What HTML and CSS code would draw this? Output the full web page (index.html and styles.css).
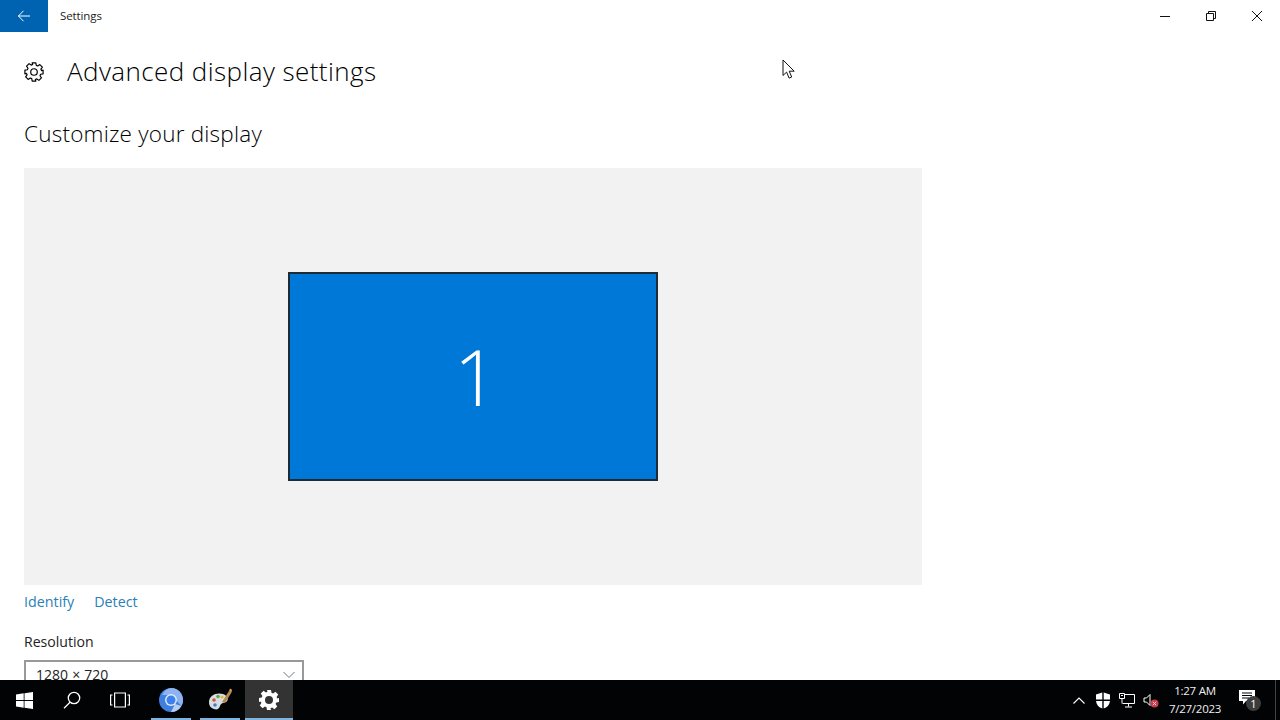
FILE: index.html
```html
<!DOCTYPE html>
<html lang="en">
<head>
<meta charset="utf-8">
<title>Settings</title>
<link rel="stylesheet" href="styles.css">
</head>
<body>
<div class="window">
  <header class="titlebar">
    <button class="back" aria-label="Back">
      <svg width="16" height="16" viewBox="0 0 16 16" fill="none" stroke="#fff" stroke-width="1"><path d="M2.5 8H14M7.5 2.800 2.400 8l5.100 5.200"/></svg>
    </button>
    <span class="app-name">Settings</span>
    <div class="controls">
      <span class="control"><svg width="12" height="12" viewBox="0 0 12 12" stroke="#111" fill="none"><path d="M1 6.500h10"/></svg></span>
      <span class="control"><svg width="12" height="12" viewBox="0 0 12 12" stroke="#111" fill="none"><path d="M1.500 3.500h7v7h-7zM3.500 3.500v-2h7v7h-2"/></svg></span>
      <span class="control"><svg width="12" height="12" viewBox="0 0 12 12" stroke="#111" fill="none"><path d="M1 1l10 10M11 1 1 11"/></svg></span>
    </div>
  </header>
  <main class="content">
    <div class="page-head">
      <svg class="page-gear" width="20" height="20" viewBox="-1 -1 22 22" fill="none" stroke="#000" stroke-width="1.300" stroke-linejoin="round"><path d="M8 0h4l.5 2.700 1.600.7 2.300-1.600 2.800 2.800-1.600 2.300.7 1.600L20 8v4l-2.700.5-.7 1.600 1.600 2.300-2.800 2.800-2.300-1.600-1.600.7L12 20H8l-.5-2.700-1.600-.7-2.300 1.600-2.800-2.800 1.600-2.300-.7-1.600L0 12V8l2.700-.5.7-1.600-1.600-2.300 2.800-2.800 2.300 1.600 1.600-.7z"/><circle cx="10" cy="10" r="3.600"/></svg>
      <h1 class="page-title">Advanced display settings</h1>
    </div>
    <h2 class="section-title">Customize your display</h2>
    <div class="preview">
      <div class="monitor">1</div>
    </div>
    <div class="links">
      <a class="link">Identify</a>
      <a class="link">Detect</a>
    </div>
    <label class="field-label">Resolution</label>
    <div class="select">
      <span>1280 × 720</span>
      <svg width="12" height="8" viewBox="0 0 12 8" fill="none" stroke="#777"><path d="M.5 1 6 6.500 11.500 1"/></svg>
    </div>
  </main>
  <svg class="cursor" width="13" height="21" viewBox="0 0 13 21"><path d="M1 1v15.500l3.600-3.400 2.500 6 2.600-1.100-2.500-5.800h5z" fill="#fff" stroke="#111" stroke-width="1"/></svg>
</div>
<footer class="taskbar">
  <div class="task"><svg width="17" height="17" viewBox="0 0 17 17" fill="#fff"><path d="M0 2.500 7.700 1.300v6.700H0zM8.500 1.200 17 0v8H8.500zM0 9h7.700v6.700L0 14.500zM8.500 9H17v8l-8.500-1.200z"/></svg></div>
  <div class="task"><svg width="18" height="18" viewBox="0 0 18 18" fill="none" stroke="#fff" stroke-width="1.300"><circle cx="11" cy="7" r="5.700"/><path d="M7 11.200 1 17.200"/></svg></div>
  <div class="task"><svg width="20" height="16" viewBox="0 0 20 16" fill="none" stroke="#fff" stroke-width="1.200"><path d="M4.600 1h10.800v14H4.600zM2.500 3H.6v10h1.900M17.500 3h1.900v10h-1.900"/></svg></div>
  <div class="task app open narrow"><svg width="24" height="24" viewBox="0 0 24 24"><circle cx="12" cy="12" r="12" fill="#3f7fe0"/><path d="M12 0a12 12 0 0 1 10.400 18L17 12a5 5 0 0 0-5-5H3A12 12 0 0 1 12 0z" fill="#8fb3ee"/><path d="M22.400 18A12 12 0 0 1 12 24l4-8z" fill="#b9cdef"/><circle cx="12" cy="12" r="6" fill="#dfe8f7"/><circle cx="12" cy="12" r="4.500" fill="#3b82f0"/></svg></div>
  <div class="task app open narrow"><svg width="26" height="24" viewBox="0 0 26 24"><path d="M2 14C2 7 10 4 16 6c5 2 6 6 3 8-3 1-5 1-6 4-1 3-3 4-6 3-3-1-5-3-5-7z" fill="#d9dee2"/><circle cx="7" cy="12" r="1.800" fill="#d94f3d"/><circle cx="11" cy="8.500" r="1.800" fill="#5aa844"/><circle cx="15" cy="9" r="1.600" fill="#e2b93b"/><circle cx="8" cy="17" r="1.800" fill="#3f7fd0"/><path d="M15 14 22 3l2.500 1.500L18 15z" fill="#b58a55"/><path d="M22 3l1-2.500 2 1.300-.5 2.700z" fill="#d8a24a"/></svg></div>
  <div class="task app open active"><svg width="20" height="20" viewBox="0 0 20 20"><path fill="#fff" fill-rule="evenodd" d="M8 0h4l.5 2.700 1.600.7 2.300-1.600 2.800 2.800-1.600 2.300.7 1.600L20 8v4l-2.700.5-.7 1.600 1.600 2.300-2.800 2.800-2.300-1.600-1.600.7L12 20H8l-.5-2.700-1.600-.7-2.300 1.600-2.800-2.800 1.600-2.300-.7-1.600L0 12V8l2.700-.5.7-1.600-1.600-2.300 2.800-2.800 2.300 1.600 1.600-.7zM10 6a4 4 0 1 0 0 8 4 4 0 0 0 0-8z"/></svg></div>
  <div class="tray">
    <span class="tray-icon"><svg width="12" height="7" viewBox="0 0 12 7" fill="none" stroke="#fff" stroke-width="1.100"><path d="M.5 6.500 6 1l5.500 5.500"/></svg></span>
    <span class="tray-icon"><svg width="16" height="17" viewBox="0 0 16 17" fill="#fff"><path d="M1 2.500 7.300.6V7.500H1zM8.700.6 15 2.500v5H8.700zM1 9h6.300v7.500C4 15.500 1.500 13 1 9zM8.700 9H15c-.5 4-3 6.500-6.300 7.500z"/></svg></span>
    <span class="tray-icon"><svg width="16" height="15" viewBox="0 0 16 15" fill="none" stroke="#fff"><path d="M3.500 1.500h12v9h-12M9.500 10.500v3M6 14h7"/><path d="M.5.500h5v5h-5z" fill="#000"/><path d="M2 2.500h2M3 5.500v5"/></svg></span>
    <span class="tray-icon"><svg width="16" height="15" viewBox="0 0 16 15"><path d="M1 5h2.500L7 1.500v11L3.500 9H1z" fill="none" stroke="#fff"/><circle cx="11.500" cy="10.500" r="4" fill="#c93c4a"/><path d="M9.800 8.800l3.400 3.400m0-3.400-3.400 3.400" stroke="#f5d0d4"/></svg></span>
    <div class="clock"><span>1:27 AM</span><span>7/27/2023</span></div>
    <span class="notify">
      <svg width="16" height="15" viewBox="0 0 16 15" fill="#fff"><path fill-rule="evenodd" d="M0 0h16v11H7l-3 3.500V11H0zM3 2.500v1h10v-1zM3 5v1h10V5zM3 7.500v1h7v-1z"/></svg>
      <span class="badge">1</span>
    </span>
    <span class="desktop"></span>
  </div>
</footer>
</body>
</html>
```
FILE: styles.css
```css
* { box-sizing: border-box; }
html, body { margin: 0; height: 100%; }
body {
  width: 1280px;
  height: 720px;
  overflow: hidden;
  display: flex;
  flex-direction: column;
  background: #fff;
  font-family: "Open Sans", "Noto Sans", sans-serif;
  color: #1a1a1a;
}
.window { position: relative; flex: 1; min-height: 0; display: flex; flex-direction: column; overflow: hidden; }
.titlebar { height: 32px; flex: none; display: flex; align-items: center; }
.back {
  width: 48px; height: 32px; border: 0; padding: 0; background: #0063b1;
  display: flex; align-items: center; justify-content: center;
}
.app-name { margin-left: 12px; font-size: 11.500px; letter-spacing: -.1px; color: #222; position: relative; top: -1px; }
.controls { margin-left: auto; display: flex; }
.control { width: 46px; height: 32px; display: flex; align-items: center; justify-content: center; }
.content { flex: 1; min-height: 0; padding: 0 0 0 24px; overflow: hidden; }
.page-head { display: flex; align-items: center; height: 48px; margin-top: 16px; }
.page-gear { flex: none; margin-top: -1px; }
.page-title {
  margin: 0 0 2px 23px; font-size: 26px; font-weight: 300; line-height: 46px; color: #000;
  letter-spacing: .42px; white-space: nowrap;
}
.section-title {
  margin: 23px 0 0; font-size: 22.500px; font-weight: 300; line-height: 30px; color: #000;
  letter-spacing: .22px; white-space: nowrap;
}
.preview {
  width: 898px; height: 417px; margin-top: 19px; background: #f2f2f2;
  padding: 104px 0 0 264px;
}
.monitor {
  width: 370px; height: 209px; background: #0078d7; border: 2px solid #1d2b36;
  color: #fff; font-size: 78px; font-weight: 300; line-height: 205px; text-align: center;
  padding-left: 6px;
}
.links { display: flex; gap: 20px; margin-top: 6px; height: 20px; align-items: center; }
.link { font-size: 14.300px; color: #2a7fb8; }
.field-label { display: block; margin-top: 21px; height: 20px; line-height: 20px; font-size: 14.100px; color: #222; }
.select {
  width: 280px; height: 40px; margin-top: 8px; border: 2px solid #999; background: #fff;
  display: flex; justify-content: space-between; padding: 3px 6px 0 10px; font-size: 14px; word-spacing: .5px; color: #222;
}
.select svg { margin-top: 6px; margin-right: 1px; }
.cursor { position: absolute; left: 782px; top: 59px; }
.taskbar { height: 40px; flex: none; background: #020304; display: flex; color: #fff; }
.task { width: 48px; height: 40px; flex: none; display: flex; align-items: center; justify-content: center; }
.app { position: relative; }
.open::after { content: ""; position: absolute; left: 0; right: 0; bottom: 0; height: 2px; background: #7db4e0; }
.narrow { width: 40px; margin-left: 7px; }
.narrow + .narrow { margin-left: 9px; }
.active { background: #333; margin-left: 5px; }
.tray { margin-left: auto; display: flex; align-items: center; height: 40px; }
.tray-icon { width: 24px; display: flex; justify-content: center; align-items: center; }
.clock {
  width: 62px; margin-left: 1px; display: flex; flex-direction: column; align-items: center;
  font-size: 11.500px; line-height: 18px; letter-spacing: -.25px; color: #eee; white-space: nowrap;
}
.notify { position: relative; width: 20px; height: 22px; margin-left: 11px; display: flex; align-items: flex-start; justify-content: center; padding-top: 1px; }
.badge {
  position: absolute; left: 9px; top: 7px; width: 15px; height: 15px; border-radius: 50%;
  background: #3c3c3c; font-size: 11px; line-height: 15px; text-align: center; color: #fff;
}
.desktop { width: 1px; height: 40px; margin-left: 18px; margin-right: 4px; background: #444; }
```
